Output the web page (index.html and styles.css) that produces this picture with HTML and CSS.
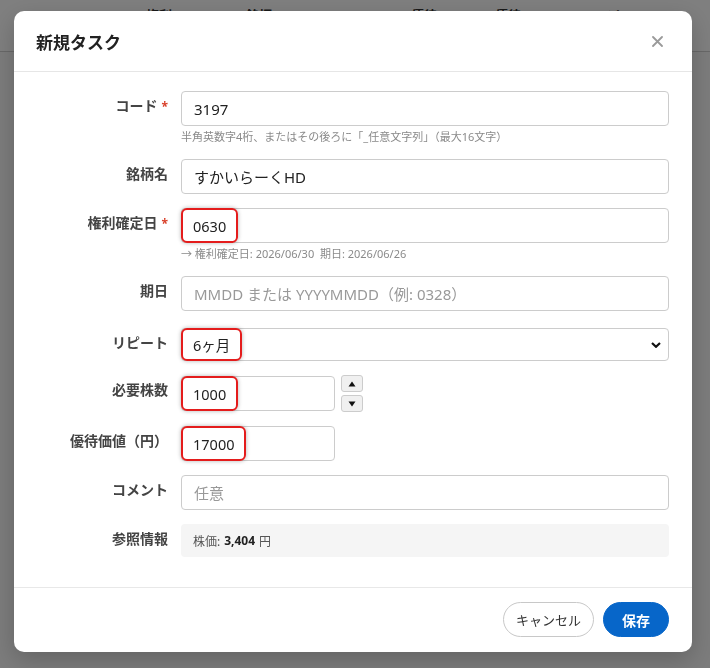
FILE: index.html
```html
<!DOCTYPE html>
<html>
    <head>
        <meta charset="utf-8">
        <title>新規タスク</title>
        <link rel="stylesheet" href="styles.css">
    </head>
    <body>
        <div class="page">
            <div class="table-head">
                <div class="th th-date">権利<br>確定日</div>
                <div class="th th-name">銘柄<br>コード</div>
                <div class="th th-value">優待<br>価値</div>
                <div class="th th-yield">優待<br>利回り</div>
                <div class="th th-cost">コスト<br>合計</div>
            </div>
        </div>

        <div class="overlay">
            <div class="modal">
                <div class="modal-header">
                    <h2 class="modal-title">新規タスク</h2>
                    <button class="close" type="button">
                        <svg width="11" height="11" viewBox="0 0 11 11"><path d="M1 1 L10 10 M10 1 L1 10" stroke="#9a9a9a" stroke-width="1.8" stroke-linecap="round"/></svg>
                    </button>
                </div>

                <div class="modal-body">
                    <div class="row">
                        <label class="label">コード<span class="req">*</span></label>
                        <div class="control">
                            <input class="input" value="3197">
                            <div class="hint">半角英数字4桁、またはその後ろに「_任意文字列」（最大16文字）</div>
                        </div>
                    </div>

                    <div class="row">
                        <label class="label">銘柄名</label>
                        <div class="control">
                            <input class="input" value="すかいらーくHD">
                        </div>
                    </div>

                    <div class="row">
                        <label class="label">権利確定日<span class="req">*</span></label>
                        <div class="control">
                            <div class="input input-marked"><span class="mark">0630</span></div>
                            <div class="hint">→ 権利確定日: 2026/06/30&nbsp;&nbsp;期日: 2026/06/26</div>
                        </div>
                    </div>

                    <div class="row">
                        <label class="label">期日</label>
                        <div class="control">
                            <input class="input" placeholder="MMDD または YYYYMMDD（例: 0328）">
                        </div>
                    </div>

                    <div class="row row-select">
                        <label class="label">リピート</label>
                        <div class="control">
                            <div class="select input-marked">
                                <span class="mark">6ヶ月</span>
                                <svg class="chevron" width="10" height="6" viewBox="0 0 10 6"><path d="M1 1 L5 4.8 L9 1" fill="none" stroke="#111" stroke-width="2.2"/></svg>
                            </div>
                        </div>
                    </div>

                    <div class="row">
                        <label class="label">必要株数</label>
                        <div class="control control-number">
                            <div class="input input-short input-marked"><span class="mark">1000</span></div>
                            <div class="spinner">
                                <button class="spin" type="button"><svg width="8" height="6" viewBox="0 0 8 6"><path d="M4 0.5 L7.5 5.5 L0.5 5.5 Z" fill="#111"/></svg></button>
                                <button class="spin" type="button"><svg width="8" height="6" viewBox="0 0 8 6"><path d="M0.5 0.5 L7.5 0.5 L4 5.5 Z" fill="#111"/></svg></button>
                            </div>
                        </div>
                    </div>

                    <div class="row">
                        <label class="label">優待価値（円）</label>
                        <div class="control">
                            <div class="input input-short input-marked"><span class="mark">17000</span></div>
                        </div>
                    </div>

                    <div class="row">
                        <label class="label">コメント</label>
                        <div class="control">
                            <input class="input" placeholder="任意">
                        </div>
                    </div>

                    <div class="row row-last">
                        <label class="label">参照情報</label>
                        <div class="control">
                            <div class="info">株価: <b>3,404</b> 円</div>
                        </div>
                    </div>
                </div>

                <div class="modal-footer">
                    <button class="btn btn-cancel" type="button">キャンセル</button>
                    <button class="btn btn-save" type="button">保存</button>
                </div>
            </div>
        </div>
    </body>
</html>
```

FILE: styles.css
```css
html, body {
    margin: 0;
    padding: 0;
}

body {
    font-family: "Noto Sans", "Noto Sans CJK JP", sans-serif;
    color: #222;
    background: #f8f8f8;
}

/* page behind the dialog */
.table-head {
    display: flex;
    height: 52px;
    background: #fff;
    border-bottom: 1px solid #d0d0d0;
    padding-left: 146px;
    box-sizing: border-box;
}

.th {
    font-size: 13px;
    font-weight: bold;
    line-height: 20px;
    padding-top: 5px;
    color: #333;
}

.th-date { width: 100px; }
.th-name { width: 165px; }
.th-value { width: 84px; }
.th-yield { width: 92px; }

/* dialog */
.overlay {
    position: fixed;
    top: 0;
    left: 0;
    right: 0;
    bottom: 0;
    background: rgba(0, 0, 0, 0.5);
    display: flex;
    align-items: flex-start;
    padding: 11px 0 0 14px;
}

.modal {
    width: 678px;
    background: #fff;
    border-radius: 10px;
    box-shadow: 0 8px 24px rgba(0, 0, 0, 0.2);
}

.modal-header {
    height: 60px;
    display: flex;
    align-items: center;
    justify-content: space-between;
    padding: 0 23px 0 22px;
    border-bottom: 1px solid #e6e6e6;
}

.modal-title {
    margin: 0;
    font-size: 17px;
    font-weight: bold;
    color: #222;
}

.close {
    width: 24px;
    height: 24px;
    border: none;
    background: none;
    padding: 0;
    display: flex;
    align-items: center;
    justify-content: center;
    cursor: pointer;
}

.modal-body {
    padding: 19px 23px 30px 22px;
}

.row {
    display: grid;
    grid-template-columns: 132px 1fr;
    column-gap: 13px;
    margin-bottom: 14px;
}

.row-select {
    margin-top: 17px;
}

.row-last {
    margin-bottom: 0;
}

.label {
    text-align: right;
    font-size: 14px;
    font-weight: bold;
    line-height: 20px;
    padding-top: 5px;
    color: #444;
}

.req {
    color: #d9412b;
    font-size: 12px;
    margin-left: 4px;
}

.input {
    display: flex;
    align-items: center;
    width: 100%;
    height: 35px;
    box-sizing: border-box;
    border: 1px solid #ccc;
    border-radius: 4px;
    padding: 0 12px;
    font-family: inherit;
    font-size: 15px;
    color: #222;
    background: #fff;
    outline: none;
}

.input::placeholder {
    color: #999;
}

.input-marked {
    padding-left: 0;
    align-items: stretch;
}

.input-short {
    width: 154px;
}

.mark {
    display: flex;
    align-items: center;
    margin: -1px 0 -1px -1px;
    padding: 0 10px;
    border: 2px solid #e41c1c;
    border-radius: 6px;
    box-shadow: 0 0 4px rgba(0, 0, 0, 0.3);
    font-size: 14.5px;
}

.hint {
    margin-top: 3px;
    font-size: 11px;
    line-height: 16px;
    color: #8a8a8a;
}

.select {
    display: flex;
    justify-content: space-between;
    align-items: stretch;
    height: 33px;
    box-sizing: border-box;
    border: 1px solid #ccc;
    border-radius: 4px;
    padding-right: 7px;
    font-size: 14px;
}

.chevron {
    align-self: center;
}

.control-number {
    display: flex;
    align-items: center;
    gap: 6px;
}

.spinner {
    display: flex;
    flex-direction: column;
    gap: 3px;
}

.spin {
    width: 22px;
    height: 17px;
    padding: 0;
    border: 1px solid #ccc;
    border-radius: 3px;
    background: #f0f0f0;
    display: flex;
    align-items: center;
    justify-content: center;
}

.info {
    height: 33px;
    display: flex;
    align-items: center;
    padding: 0 12px;
    background: #f5f5f5;
    border-radius: 4px;
    font-size: 12px;
    color: #555;
}

.info b {
    color: #222;
    margin: 0 4px;
}

.modal-footer {
    display: flex;
    justify-content: flex-end;
    gap: 9px;
    padding: 14px 23px 15px;
    border-top: 1px solid #e8e8e8;
}

.btn {
    height: 35px;
    border-radius: 18px;
    font-family: inherit;
    font-size: 14px;
    cursor: pointer;
}

.btn-cancel {
    width: 91px;
    font-size: 13px;
    background: #fff;
    border: 1px solid #c8c8c8;
    color: #333;
}

.btn-save {
    width: 66px;
    background: #0766c9;
    border: 1px solid #0766c9;
    color: #fff;
    font-weight: 600;
}
```
